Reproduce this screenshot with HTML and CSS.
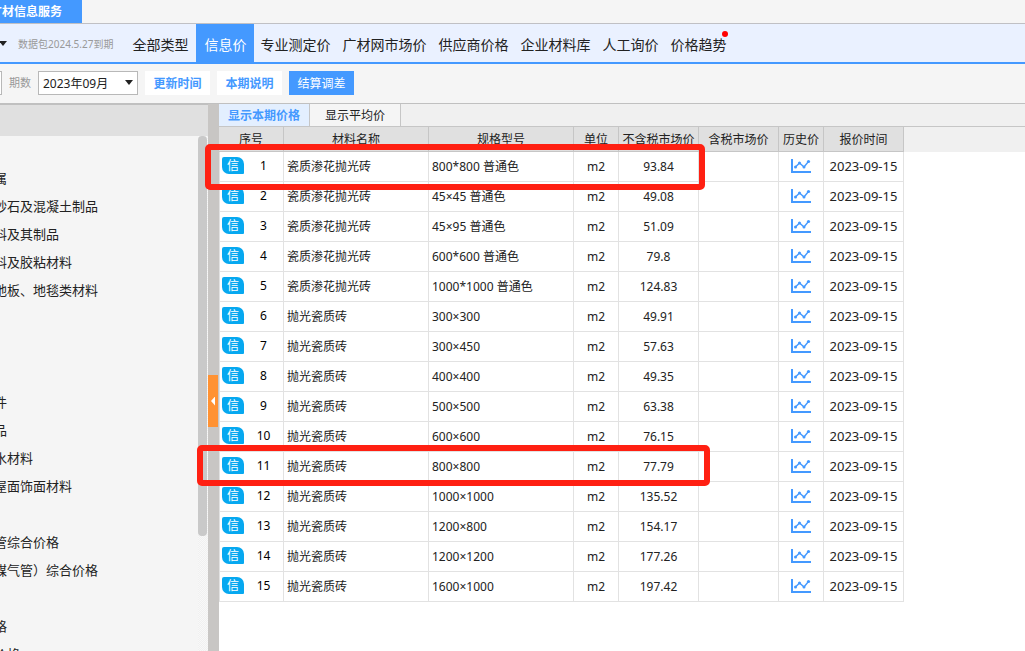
FILE: index.html
```
<!DOCTYPE html>
<html lang="zh-CN">
<head>
<meta charset="utf-8">
<title>广材信息服务</title>
<link rel="stylesheet" href="styles.css">
</head>
<body>
<svg class="symbols" aria-hidden="true">
  <symbol id="trend" viewBox="0 0 20 14">
    <path d="M1 0V13H20" fill="none" stroke="#4499ff" stroke-width="2"/>
    <path d="M4.500 8L8.500 4L13 8L17.500 2.500" fill="none" stroke="#4499ff" stroke-width="1.400"/>
    <g fill="#4499ff"><circle cx="4.500" cy="8" r="1.500"/><circle cx="8.500" cy="4" r="1.500"/><circle cx="13" cy="8" r="1.500"/><circle cx="17.500" cy="2.500" r="1.600"/></g>
  </symbol>
</svg>
<header class="titlebar"><h1 class="title">广材信息服务</h1></header>
<nav class="nav">
  <span class="caret"></span>
  <span class="expiry">数据包2024.5.27到期</span>
  <a class="nav-link" href="#">全部类型</a>
  <a class="nav-link active" href="#" aria-current="page">信息价</a>
  <a class="nav-link" href="#">专业测定价</a>
  <a class="nav-link" href="#">广材网市场价</a>
  <a class="nav-link" href="#">供应商价格</a>
  <a class="nav-link" href="#">企业材料库</a>
  <a class="nav-link" href="#">人工询价</a>
  <a class="nav-link" href="#"><span class="dotted">价格趋势</span></a>
</nav>
<div class="toolbar">
  <span class="field-end"></span>
  <label class="period-label" for="period">期数</label>
  <span class="select-wrap"><select id="period" class="period"><option>2023年09月</option></select></span>
  <button class="btn" type="button">更新时间</button>
  <button class="btn" type="button">本期说明</button>
  <button class="btn primary" type="button">结算调差</button>
</div>
<div class="workspace">
  <aside class="sidebar">
    <div class="sidebar-head"></div>
    <div class="sidebar-body">
      <ul class="tree">
        <li>属</li><li>砂石及混凝土制品</li><li>料及其制品</li><li>料及胶粘材料</li><li>地板、地毯类材料</li>
        <li></li><li></li><li></li>
        <li>件</li><li>品</li><li>水材料</li><li>屋面饰面材料</li>
        <li></li>
        <li>管综合价格</li><li>煤气管）综合价格</li>
        <li></li>
        <li>格</li><li>价格</li>
      </ul>
      <div class="track"><div class="thumb"></div></div>
    </div>
  </aside>
  <div class="splitter"><button class="collapse" type="button" aria-label="收起"></button></div>
  <main class="main">
    <div class="tabs">
      <button class="tab active" type="button">显示本期价格</button>
      <button class="tab" type="button">显示平均价</button>
    </div>
    <div class="table-area">
    <table class="prices">
      <colgroup><col class="c-index"><col class="c-text"><col class="c-text"><col class="c-small"><col class="c-price"><col class="c-price"><col class="c-small"><col class="c-price"></colgroup>
      <thead><tr><th>序号</th><th>材料名称</th><th>规格型号</th><th>单位</th><th>不含税市场价</th><th>含税市场价</th><th>历史价</th><th>报价时间</th></tr></thead>
      <tbody>
        <tr><td><div class="index"><span class="badge">信</span><span class="num">1</span></div></td><td class="text">瓷质渗花抛光砖</td><td class="text">800*800 普通色</td><td>m2</td><td>93.84</td><td></td><td><svg class="trend"><use href="#trend"/></svg></td><td class="date">2023-09-15</td></tr>
        <tr><td><div class="index"><span class="badge">信</span><span class="num">2</span></div></td><td class="text">瓷质渗花抛光砖</td><td class="text">45×45 普通色</td><td>m2</td><td>49.08</td><td></td><td><svg class="trend"><use href="#trend"/></svg></td><td class="date">2023-09-15</td></tr>
        <tr><td><div class="index"><span class="badge">信</span><span class="num">3</span></div></td><td class="text">瓷质渗花抛光砖</td><td class="text">45×95 普通色</td><td>m2</td><td>51.09</td><td></td><td><svg class="trend"><use href="#trend"/></svg></td><td class="date">2023-09-15</td></tr>
        <tr><td><div class="index"><span class="badge">信</span><span class="num">4</span></div></td><td class="text">瓷质渗花抛光砖</td><td class="text">600*600 普通色</td><td>m2</td><td>79.8</td><td></td><td><svg class="trend"><use href="#trend"/></svg></td><td class="date">2023-09-15</td></tr>
        <tr><td><div class="index"><span class="badge">信</span><span class="num">5</span></div></td><td class="text">瓷质渗花抛光砖</td><td class="text">1000*1000 普通色</td><td>m2</td><td>124.83</td><td></td><td><svg class="trend"><use href="#trend"/></svg></td><td class="date">2023-09-15</td></tr>
        <tr><td><div class="index"><span class="badge">信</span><span class="num">6</span></div></td><td class="text">抛光瓷质砖</td><td class="text">300×300</td><td>m2</td><td>49.91</td><td></td><td><svg class="trend"><use href="#trend"/></svg></td><td class="date">2023-09-15</td></tr>
        <tr><td><div class="index"><span class="badge">信</span><span class="num">7</span></div></td><td class="text">抛光瓷质砖</td><td class="text">300×450</td><td>m2</td><td>57.63</td><td></td><td><svg class="trend"><use href="#trend"/></svg></td><td class="date">2023-09-15</td></tr>
        <tr><td><div class="index"><span class="badge">信</span><span class="num">8</span></div></td><td class="text">抛光瓷质砖</td><td class="text">400×400</td><td>m2</td><td>49.35</td><td></td><td><svg class="trend"><use href="#trend"/></svg></td><td class="date">2023-09-15</td></tr>
        <tr><td><div class="index"><span class="badge">信</span><span class="num">9</span></div></td><td class="text">抛光瓷质砖</td><td class="text">500×500</td><td>m2</td><td>63.38</td><td></td><td><svg class="trend"><use href="#trend"/></svg></td><td class="date">2023-09-15</td></tr>
        <tr><td><div class="index"><span class="badge">信</span><span class="num">10</span></div></td><td class="text">抛光瓷质砖</td><td class="text">600×600</td><td>m2</td><td>76.15</td><td></td><td><svg class="trend"><use href="#trend"/></svg></td><td class="date">2023-09-15</td></tr>
        <tr><td><div class="index"><span class="badge">信</span><span class="num">11</span></div></td><td class="text">抛光瓷质砖</td><td class="text">800×800</td><td>m2</td><td>77.79</td><td></td><td><svg class="trend"><use href="#trend"/></svg></td><td class="date">2023-09-15</td></tr>
        <tr><td><div class="index"><span class="badge">信</span><span class="num">12</span></div></td><td class="text">抛光瓷质砖</td><td class="text">1000×1000</td><td>m2</td><td>135.52</td><td></td><td><svg class="trend"><use href="#trend"/></svg></td><td class="date">2023-09-15</td></tr>
        <tr><td><div class="index"><span class="badge">信</span><span class="num">13</span></div></td><td class="text">抛光瓷质砖</td><td class="text">1200×800</td><td>m2</td><td>154.17</td><td></td><td><svg class="trend"><use href="#trend"/></svg></td><td class="date">2023-09-15</td></tr>
        <tr><td><div class="index"><span class="badge">信</span><span class="num">14</span></div></td><td class="text">抛光瓷质砖</td><td class="text">1200×1200</td><td>m2</td><td>177.26</td><td></td><td><svg class="trend"><use href="#trend"/></svg></td><td class="date">2023-09-15</td></tr>
        <tr><td><div class="index"><span class="badge">信</span><span class="num">15</span></div></td><td class="text">抛光瓷质砖</td><td class="text">1600×1000</td><td>m2</td><td>197.42</td><td></td><td><svg class="trend"><use href="#trend"/></svg></td><td class="date">2023-09-15</td></tr>
      </tbody>
    </table>
    </div>
    <div class="mark mark-first"></div>
    <div class="mark mark-second"></div>
  </main>
</div>
</body>
</html>
```
FILE: styles.css
```
* { box-sizing: border-box; }
body {
  margin: 0;
  height: 100vh;
  display: flex;
  flex-direction: column;
  overflow: hidden;
  background: #f5f5f5;
  color: #222;
  font: 12px/18px "Noto Sans", "Noto Sans CJK SC", sans-serif;
}
button, select { font: inherit; }
.symbols { position: absolute; width: 0; height: 0; }

.titlebar { flex: none; display: flex; height: 24px; border-bottom: 1px solid #c0c0c4; }
.title {
  margin: 0 0 0 -10px;
  padding-right: 20px;
  background: #4499ff;
  color: #fff;
  font-size: 12px;
  line-height: 24px;
  font-weight: 700;
}

.nav {
  flex: none;
  display: flex;
  height: 40px;
  background: #eaf1ff;
  border-bottom: 2px solid #4499ff;
  font-size: 14px;
  line-height: 42px;
  white-space: nowrap;
}
.caret, .select-wrap::after {
  border: 4px solid transparent;
  border-top: 5px solid #222;
  border-bottom: 0;
}
.caret { margin: 17px 11px 0 -1px; height: 5px; }
.expiry { margin-right: 13px; color: #999; font-size: 10px; line-height: 40px; }
.nav-link { padding: 0 6px; color: #222; text-decoration: none; }
.nav-link.active { height: 40px; margin-left: 2px; padding: 0 8px; background: #4499ff; color: #fff; }
.dotted { position: relative; }
.dotted::after {
  content: "";
  position: absolute;
  top: -4px;
  right: -2px;
  width: 6px;
  height: 6px;
  border-radius: 50%;
  background: #f00;
}

.toolbar {
  flex: none;
  display: flex;
  gap: 7px;
  height: 40px;
  padding-top: 7px;
  border-bottom: 1px solid #c0c0c0;
}
.field-end { width: 2px; height: 24px; border: 1px solid #b8b8b8; border-left: 0; background: #fff; }
.period-label { width: 22px; color: #999; font-size: 11px; line-height: 24px; }
.select-wrap { position: relative; }
.select-wrap::after { content: ""; position: absolute; top: 9px; right: 5px; pointer-events: none; }
.period {
  appearance: none;
  display: block;
  width: 100px;
  height: 24px;
  padding: 1px 4px 0;
  border: 1px solid #b8b8b8;
  border-radius: 0;
  background: #fff;
  color: #222;
}
.btn {
  width: 65px;
  height: 24px;
  padding: 2px 0 0;
  border: 0;
  background: #fff;
  color: #4499ff;
  font-weight: 700;
}
.btn.primary { background: #4499ff; color: #fff; font-weight: 400; }

.workspace { flex: 1; display: flex; min-height: 0; }
.sidebar { flex: none; display: flex; flex-direction: column; width: 208px; overflow: hidden; }
.sidebar-head { flex: none; height: 32px; border-top: 1px solid #c0c0c0; background: #e0e0e0; }
.sidebar-body { flex: 1; display: flex; min-height: 0; }
.tree {
  flex: 1;
  margin: 0;
  padding: 28px 0 0;
  list-style: none;
  text-indent: -6px;
  font-size: 13px;
  line-height: 28px;
  white-space: nowrap;
}
.tree li { height: 28px; }
.track { width: 10px; background: repeating-conic-gradient(#f0f0f0 0 25%, #f8f8f8 0 50%) 0 0 / 2px 2px; }
.thumb { width: 9px; height: 400px; border-radius: 4px; background: #c9c9c9; }
.splitter { flex: none; position: relative; width: 11px; background: #c8c6c4; }
.collapse {
  position: absolute;
  top: 271px;
  left: 0;
  display: flex;
  align-items: center;
  width: 10px;
  height: 52px;
  padding: 0 3px;
  border: 0;
  background: #ff9233;
}
.collapse::before {
  content: "";
  width: 4px;
  height: 9px;
  background: #fff;
  clip-path: polygon(100% 0, 100% 100%, 0 50%);
}

.main { flex: 1; position: relative; min-width: 0; background: #fff; }
.tabs { display: flex; height: 23px; background: #f0f0f0; border-bottom: 1px solid #c6c6c6; }
.tab {
  width: 91px;
  padding: 2px 0 0;
  border: 0;
  border-right: 1px solid #c6c6c6;
  background: #f5f5f5;
  color: #222;
}
.tab.active { background: #e3efff; color: #4499ff; font-weight: 700; }
.table-area { background: linear-gradient(#f0f0f0 0 25px, #fff 25px); }
.prices { table-layout: fixed; width: 685px; border-collapse: separate; border-spacing: 0; }
.c-index { width: 65px; }
.c-text { width: 145px; }
.c-small { width: 45px; }
.c-price { width: 80px; }
.prices th {
  height: 25px;
  padding: 2px 0 0;
  border-right: 1px solid #c6c6c6;
  border-bottom: 1px solid #c6c6c6;
  background: #e0e0e0;
  font-weight: 400;
  white-space: nowrap;
}
.prices td {
  height: 30px;
  padding: 0;
  border-right: 1px solid #e2e2e2;
  border-bottom: 1px solid #e2e2e2;
  text-align: center;
}
.prices td:first-child { border-left: 1px solid #e2e2e2; }
.prices td.text { padding-left: 3px; text-align: left; }
.prices td.date { padding-bottom: 2px; font-size: 13px; }
.index { display: flex; align-items: center; padding: 0 0 2px 2px; }
.badge {
  width: 22px;
  height: 17px;
  border-radius: 2px 7px 1px 7px;
  background: #06a8f0;
  color: #fff;
  line-height: 17px;
}
.num { flex: 1; color: #000; }
.trend { display: block; width: 20px; height: 14px; margin: 0 auto 2px; }

.mark { position: absolute; border: 6px solid #ff2012; border-radius: 5px; pointer-events: none; }
.mark-first { top: 40px; left: -14px; width: 500px; height: 46px; }
.mark-second { top: 341px; left: -22px; width: 513px; height: 41px; }
```
